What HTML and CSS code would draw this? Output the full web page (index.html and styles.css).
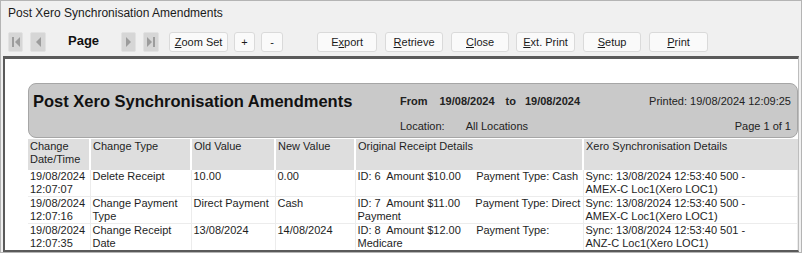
FILE: index.html
```html
<!DOCTYPE html>
<html lang="en">
<head>
<meta charset="utf-8"/>
<title>Post Xero Synchronisation Amendments</title>
<link rel="stylesheet" href="styles.css">
</head>
<body>
<div class="window">
    <div class="titlebar">Post Xero Synchronisation Amendments</div>

    <div class="toolbar">
        <button class="nav nav-first" disabled>
            <svg width="10" height="12" viewBox="0 0 10 12"><rect x="1" y="1" width="2" height="10"/><path d="M9 1 L4 6 L9 11 Z"/></svg>
        </button>
        <button class="nav nav-prev" disabled>
            <svg width="10" height="12" viewBox="0 0 10 12"><path d="M8 1 L3 6 L8 11 Z"/></svg>
        </button>
        <span class="page-label">Page</span>
        <button class="nav nav-next" disabled>
            <svg width="10" height="12" viewBox="0 0 10 12"><path d="M2 1 L7 6 L2 11 Z"/></svg>
        </button>
        <button class="nav nav-last" disabled>
            <svg width="10" height="12" viewBox="0 0 10 12"><path d="M1 1 L6 6 L1 11 Z"/><rect x="7" y="1" width="2" height="10"/></svg>
        </button>
        <button class="btn btn-zoom"><u>Z</u>oom Set</button>
        <button class="btn btn-small">+</button>
        <button class="btn btn-small btn-minus">-</button>

        <button class="btn btn-wide btn-export">E<u>x</u>port</button>
        <button class="btn btn-wide"><u>R</u>etrieve</button>
        <button class="btn btn-wide"><u>C</u>lose</button>
        <button class="btn btn-wide btn-ext"><u>E</u>xt. Print</button>
        <button class="btn btn-wide"><u>S</u>etup</button>
        <button class="btn btn-wide btn-print"><u>P</u>rint</button>
    </div>

    <div class="viewport">
        <div class="report">
            <div class="report-head">
                <div class="report-title">Post Xero Synchronisation Amendments</div>
                <div class="range"><b>From</b><b class="d1">19/08/2024</b><b class="to">to</b><b class="d2">19/08/2024</b></div>
                <div class="printed">Printed: 19/08/2024 12:09:25</div>
                <div></div>
                <div class="location">Location:<span class="loc-value">All Locations</span></div>
                <div class="pageno">Page 1 of 1</div>
            </div>

            <table class="grid">
                <colgroup>
                    <col style="width:62px">
                    <col style="width:101px">
                    <col style="width:84px">
                    <col style="width:80px">
                    <col style="width:228px">
                    <col>
                </colgroup>
                <thead>
                    <tr>
                        <th>Change<br>Date/Time</th>
                        <th>Change Type</th>
                        <th>Old Value</th>
                        <th>New Value</th>
                        <th>Original Receipt Details</th>
                        <th>Xero Synchronisation Details</th>
                    </tr>
                </thead>
                <tbody>
                    <tr>
                        <td>19/08/2024<br>12:07:07</td>
                        <td>Delete Receipt</td>
                        <td>10.00</td>
                        <td>0.00</td>
                        <td>ID: 6  Amount $10.00     Payment Type: Cash</td>
                        <td>Sync: 13/08/2024 12:53:40 500 -<br>AMEX-C Loc1(Xero LOC1)</td>
                    </tr>
                    <tr>
                        <td>19/08/2024<br>12:07:16</td>
                        <td>Change Payment<br>Type</td>
                        <td>Direct Payment</td>
                        <td>Cash</td>
                        <td>ID: 7  Amount $11.00     Payment Type: Direct<br>Payment</td>
                        <td>Sync: 13/08/2024 12:53:40 500 -<br>AMEX-C Loc1(Xero LOC1)</td>
                    </tr>
                    <tr>
                        <td>19/08/2024<br>12:07:35</td>
                        <td>Change Receipt<br>Date</td>
                        <td>13/08/2024</td>
                        <td>14/08/2024</td>
                        <td>ID: 8  Amount $12.00     Payment Type:<br>Medicare</td>
                        <td>Sync: 13/08/2024 12:53:40 501 -<br>ANZ-C Loc1(Xero LOC1)</td>
                    </tr>
                </tbody>
            </table>
        </div>
    </div>
</div>
</body>
</html>
```

FILE: styles.css
```css
html, body {
    margin: 0;
    padding: 0;
    background: #f0f0f0;
}
.window {
    width: 802px;
    height: 253px;
    box-sizing: border-box;
    border: 1px solid #b4b4b4;
    background: #f0f0f0;
    display: flex;
    flex-direction: column;
    overflow: hidden;
    font-family: "Liberation Sans", Arial, sans-serif;
    color: #1e1e1e;
}
.titlebar {
    height: 26px;
    line-height: 25px;
    padding-left: 7px;
    font-size: 12px;
    color: #1a1a1a;
}
.toolbar {
    display: flex;
    align-items: center;
    padding: 5px 0 4px 7px;
    height: 20px;
}
.toolbar button {
    font-family: "Liberation Sans", Arial, sans-serif;
    font-size: 11px;
    color: #1a1a1a;
    height: 20px;
    padding: 0;
    flex: none;
}
.nav {
    width: 15px;
    margin: 0;
    background: #d6d6d6;
    border: 1px solid #e2e2e2;
    border-radius: 2px;
    display: flex;
    align-items: center;
    justify-content: center;
}
.nav svg {
    fill: #9c9c9c;
}
.nav-prev, .nav-last {
    margin-left: 7px;
    width: 16px;
}
.page-label {
    font-weight: bold;
    font-size: 13px;
    margin: -3px 22px 0 22px;
    color: #111;
}
.btn {
    margin: 0;
    background: #fafafa;
    border: 1px solid #dadada;
    border-radius: 3px;
}
.btn u {
    text-decoration-thickness: 1px;
    text-underline-offset: 1px;
}
.btn-zoom {
    width: 59px;
    margin-left: 10px;
}
.btn-small {
    width: 21px;
    margin-left: 6px;
}
.btn-minus {
    width: 22px;
}
.btn-wide {
    width: 58px;
    margin-left: 8px;
}
.btn-export {
    width: 60px;
    margin-left: 34px;
}
.btn-ext {
    width: 59px;
    margin-left: 7px;
}
.btn-print {
    width: 59px;
}

.viewport {
    flex: 1;
    margin: 0 2px 0 2px;
    border-top: 3px solid #5a5a5a;
    border-left: 2px solid #5a5a5a;
    border-right: 1px solid #bdbdbd;
    border-bottom: 2px solid #5a5a5a;
    background: #fff;
    overflow: hidden;
    padding: 24px 0 0 23px;
}
.report {
    width: 770px;
}
.report-head {
    height: 45px;
    border: 1px solid #a6a6a6;
    border-radius: 8px;
    background: #c9c9c9;
    padding: 8px 6px 0 4px;
    display: grid;
    grid-template-columns: 367px 1fr auto;
    grid-template-rows: 18px 14px;
    row-gap: 9px;
    align-items: center;
    font-size: 11px;
    color: #222;
}
.report-title {
    font-size: 16.5px;
    font-weight: bold;
    color: #111;
    white-space: nowrap;
}
.range .d1 {
    margin-left: 12px;
}
.range .to {
    margin-left: 11px;
}
.range .d2 {
    margin-left: 9px;
}
.loc-value {
    margin-left: 21px;
}
.printed, .pageno {
    text-align: right;
}

.grid {
    width: 770px;
    margin-top: 1px;
    table-layout: fixed;
    border-collapse: collapse;
    font-size: 11px;
    line-height: 13px;
    color: #1e1e1e;
}
.grid th {
    background: #dedede;
    font-weight: normal;
    text-align: left;
    vertical-align: top;
    height: 27px;
    padding: 1px 3px 3px 2px;
    border-left: 2px solid #fff;
}
.grid th:first-child {
    border-left: 0;
}
.grid td {
    vertical-align: top;
    height: 26px;
    padding: 0 3px 0 2px;
    white-space: pre;
    overflow: hidden;
    border: 1px solid #ececec;
    border-top: 0;
}
.grid td:first-child {
    border-left: 0;
}
```
